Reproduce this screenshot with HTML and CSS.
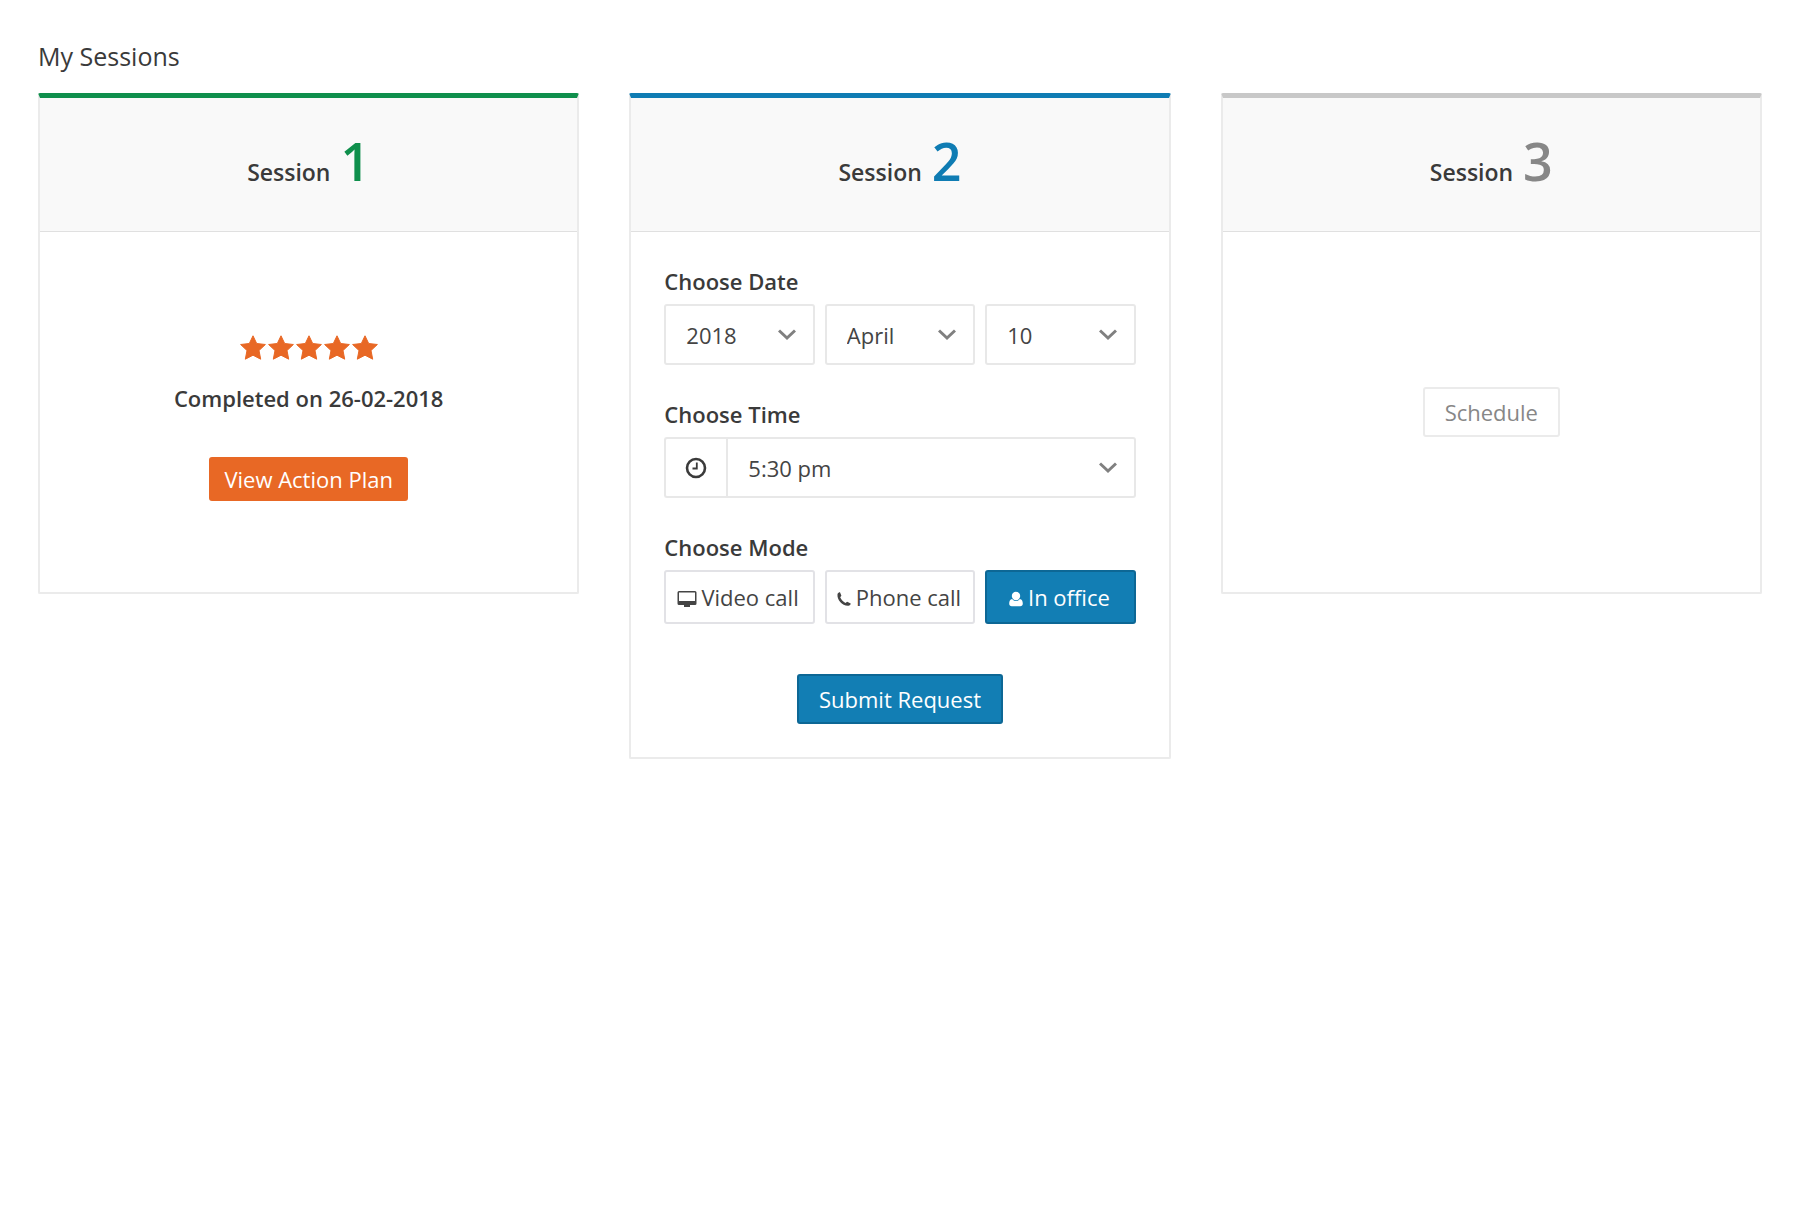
FILE: index.html
```html
<!DOCTYPE html>
<html lang="en">
<head>
<meta charset="utf-8">
<meta name="viewport" content="width=device-width, initial-scale=1">
<title>My Sessions</title>
<link rel="stylesheet" href="styles.css">
</head>
<body>
<svg class="sprite" aria-hidden="true">
  <symbol id="star" viewBox="0 0 26 25"><path stroke-linejoin="round" d="M13 0.8 16.7 8.500 25.4 9.500 19 15.500 20.700 24.200 13 20.200 5.300 24.200 7 15.500 0.6 9.500 9.300 8.500Z"/></symbol>
</svg>
<main class="page">
  <h1 class="page-title">My Sessions</h1>
  <div class="sessions">
    <section class="card card-done">
      <h2 class="card-head">Session <span class="number">1</span></h2>
      <div class="card-body centered">
        <div class="stars" role="img" aria-label="5 out of 5 stars">
          <svg class="star"><use href="#star"/></svg>
          <svg class="star"><use href="#star"/></svg>
          <svg class="star"><use href="#star"/></svg>
          <svg class="star"><use href="#star"/></svg>
          <svg class="star"><use href="#star"/></svg>
        </div>
        <p class="completed">Completed on 26-02-2018</p>
        <button class="btn btn-orange" type="button">View Action Plan</button>
      </div>
    </section>

    <section class="card card-current">
      <h2 class="card-head">Session <span class="number">2</span></h2>
      <form class="card-body form">
        <fieldset class="group">
          <legend class="label">Choose Date</legend>
          <div class="thirds">
            <select class="select" aria-label="Year"><option>2018</option></select>
            <select class="select" aria-label="Month"><option>April</option></select>
            <select class="select" aria-label="Day"><option>10</option></select>
          </div>
        </fieldset>
        <div class="group">
          <label class="label" for="time">Choose Time</label>
          <div class="time">
            <span class="time-icon">
              <svg width="22" height="22" viewBox="0 0 22 22" fill="none" stroke="currentColor"><circle cx="11" cy="11" r="9" stroke-width="2.600"/><path d="M11.800 5.500v6H7.500" stroke-width="1.800"/></svg>
            </span>
            <select class="select" id="time"><option>5:30 pm</option></select>
          </div>
        </div>
        <fieldset class="group">
          <legend class="label">Choose Mode</legend>
          <div class="thirds">
            <button class="mode" type="button"><svg width="20" height="18" viewBox="0 0 20 18" fill="currentColor"><path fill-rule="evenodd" d="M2 1h16a1.500 1.500 0 0 1 1.500 1.500v11A1.500 1.500 0 0 1 18 15h-5v2H7v-2H2A1.500 1.500 0 0 1 .5 13.500v-11A1.500 1.500 0 0 1 2 1Zm0 1.500v8.500h16v-8.500Z"/></svg>Video call</button>
            <button class="mode" type="button"><svg width="16" height="16" viewBox="0 0 16 16" fill="currentColor"><path d="M1.500 3C2 1.800 3 1.300 4 1.300L5.400 4.800 4.200 6.300C5.300 8.800 6.900 10.600 9.400 11.900L11.200 10.700 14.700 12.400C14.600 13.700 13.700 14.500 12.500 14.700 6.500 15.200.7 9 1.500 3Z"/></svg>Phone call</button>
            <button class="mode selected" type="button"><svg width="16" height="16" viewBox="0 0 16 16" fill="currentColor"><circle cx="8" cy="5" r="4.200"/><path d="M4.200 8C5.200 9.400 6.500 10 8 10s2.800-.6 3.800-2c2.200.4 3 2.300 3 4.700 0 1.600-1 2.500-2.500 2.500H3.700C2.200 15.200 1.200 14.300 1.200 12.700c0-2.400.8-4.300 3-4.700Z"/></svg>In office</button>
          </div>
        </fieldset>
        <button class="btn btn-blue" type="submit">Submit Request</button>
      </form>
    </section>

    <section class="card card-upcoming">
      <h2 class="card-head">Session <span class="number">3</span></h2>
      <div class="card-body centered">
        <button class="btn btn-plain" type="button">Schedule</button>
      </div>
    </section>
  </div>
</main>
</body>
</html>
```
FILE: styles.css
```css
* {
  box-sizing: border-box;
}

body {
  margin: 0;
  background: #fff;
  color: #3a3a3a;
  font: 400 22px/30px "Open Sans", "Noto Sans", sans-serif;
}

.sprite {
  display: none;
}

.page {
  padding: 39px 38px;
}

.page-title {
  margin: 0 0 20px;
  font-size: 25px;
  font-weight: 400;
  line-height: 34px;
}

.sessions {
  display: grid;
  grid-template-columns: repeat(3, 1fr);
  align-items: start;
  gap: 50px;
}

.card {
  --accent: #c8c8c8;
  --number: #878787;
  border: 2px solid #ebebeb;
  border-top: 5px solid var(--accent);
  border-radius: 2px;
}

.card-done {
  --accent: #0f8f4c;
  --number: #0f8f4c;
}

.card-current {
  --accent: #0f7cb3;
  --number: #0f7cb3;
}

.card-head {
  margin: 0;
  padding: 28px 0 24px;
  border-bottom: 1px solid #e0e0e0;
  background: #f9f9f9;
  font-size: 23px;
  font-weight: 600;
  line-height: 70px;
  text-align: center;
}

.number {
  margin-left: 4px;
  color: var(--number);
  font-size: 52px;
}

.centered {
  display: flex;
  flex-direction: column;
  align-items: center;
  justify-content: center;
  min-height: 360px;
}

.card-done .centered {
  padding-top: 12px;
}

.stars {
  display: flex;
  gap: 2px;
}

.star {
  width: 26px;
  height: 25px;
  fill: #e86825;
  stroke: #e86825;
}

.completed {
  margin: 23px 0 44px;
  font-weight: 600;
}

.btn {
  padding: 8px 20px;
  border: 2px solid;
  border-radius: 3px;
  font: inherit;
  line-height: 30px;
}

.btn-orange {
  padding: 5px 13px;
  border-color: #e86825;
  background: #e86825;
  color: #fff;
}

.btn-blue {
  align-self: center;
  margin-top: 16px;
  border-color: #0d6795;
  background: #127eb4;
  color: #fff;
}

.btn-plain {
  border-color: #ebebeb;
  background: #fff;
  color: #878787;
}

.form {
  display: flex;
  flex-direction: column;
  padding: 34px 33px 33px;
}

.group {
  min-width: 0;
  margin: 0 0 34px;
  padding: 0;
  border: 0;
}

.label {
  display: block;
  margin-bottom: 8px;
  padding: 0;
  font-weight: 600;
}

.thirds {
  display: grid;
  grid-template-columns: repeat(3, 1fr);
  gap: 10px;
}

.select {
  width: 100%;
  height: 61px;
  padding: 0 20px;
  border: 2px solid #e8e8e8;
  border-radius: 3px;
  appearance: none;
  background: #fff url("data:image/svg+xml,%3Csvg xmlns='http://www.w3.org/2000/svg' width='18' height='12' fill='none' stroke='%23808080' stroke-width='3'%3E%3Cpath d='M1 1.500 9 9 17 1.500'/%3E%3C/svg%3E") no-repeat right 17px center;
  color: #444;
  font: inherit;
}

.time {
  display: flex;
}

.time-icon {
  display: flex;
  flex: 0 0 62px;
  align-items: center;
  justify-content: center;
  border: 2px solid #e8e8e8;
  border-right: 0;
  border-radius: 3px 0 0 3px;
}

.time .select {
  flex: 1;
  border-radius: 0 3px 3px 0;
}

.mode {
  display: flex;
  align-items: center;
  justify-content: center;
  gap: 4px;
  height: 54px;
  padding: 0 3px 0 0;
  border: 2px solid #e2e2e6;
  border-radius: 3px;
  background: #fff;
  color: #444;
  font: inherit;
  white-space: nowrap;
}

.mode svg {
  margin-top: 3px;
}

.selected {
  border-color: #0d6795;
  background: #127eb4;
  color: #fff;
}
```
